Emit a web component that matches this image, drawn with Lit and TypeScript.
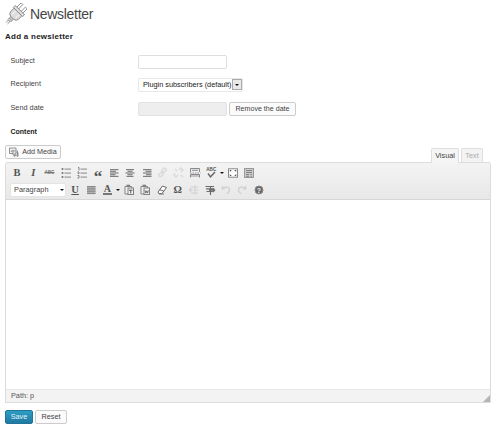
import { LitElement, html, svg, css } from "lit";
import { customElement } from "lit/decorators.js";

const lines = (rows: number[][], color = "#808080") =>
  svg`${rows.map(([x, y, w]) => svg`<rect x=${x} y=${y} width=${w} height="1.2" fill=${color}/>`)}`;

const glyphs: Record<string, unknown> = {
  bullets: svg`${lines([[6.5, 3.5, 6.5], [6.5, 7.5, 6.5], [6.5, 11.5, 6.5]], "#999")}<g fill="#777"><circle cx="4.5" cy="4" r="1.1"/><circle cx="4.5" cy="8" r="1.1"/><circle cx="4.5" cy="12" r="1.1"/></g>`,
  numbers: svg`${lines([[6.5, 3.5, 6.5], [6.5, 7.5, 6.5], [6.5, 11.5, 6.5]], "#999")}<path d="M4 2.500h1v3M3.500 7H5v1.500H3.700M3.500 10.500H5V13H3.500" fill="none" stroke="#777" stroke-width=".9"/>`,
  left: lines([[4, 4, 8.5], [4, 5.7, 6], [4, 7.4, 8.5], [4, 9.1, 5.5], [4, 10.8, 8.5]]),
  center: lines([[4, 4, 8], [5.5, 5.7, 5], [3.5, 7.4, 9], [5.5, 9.1, 5], [4.5, 10.8, 7]]),
  right: lines([[4, 4, 8.5], [6.5, 5.7, 6], [4, 7.4, 8.5], [7, 9.1, 5.5], [4, 10.8, 8.5]]),
  justify: svg`<rect x="4" y="4" width="8.5" height="8" fill="#b5b5b5"/>${lines([[4, 4, 8.5], [4, 6.3, 8.5], [4, 8.6, 8.5], [4, 10.9, 8.5]], "#8a8a8a")}`,
  link: svg`<g fill="none" stroke="#dadada" stroke-width="1.5"><rect x="7" y="4" width="5" height="3" rx="1.5" transform="rotate(-45 9 6)"/><rect x="3.5" y="8" width="5" height="3" rx="1.5" transform="rotate(-45 6 9.5)"/></g>`,
  unlink: svg`<g fill="none" stroke="#dadada" stroke-width="1.4"><path d="M4 8l-1 2 2 2 2-2M8 5l2-2 2 2-2 2M4 4l2 2M10 10l2 2"/></g>`,
  more: svg`<g fill="none" stroke="#888"><path d="M3.500 7V3.500h9V7M3.500 12.500V9.500h9v3M5 5.300h6"/><path d="M3 8h10.500" stroke-dasharray="1.500 1"/></g><path d="M4 10h8v2H4z" fill="#c4c4c4"/>`,
  full: svg`<rect x="3.500" y="3.800" width="9" height="8.400" fill="#fff" stroke="#888"/><path d="M4.800 5h2L4.800 7zM11.200 5h-2l2 2zM4.800 11h2l-2-2zM11.200 11h-2l2-2z" fill="#555"/>`,
  sink: svg`<rect x="3.500" y="3.500" width="9" height="9" fill="#ccc" stroke="#999"/><path d="M5 5.500h6M5 7.500h6M5 9.500h3M5 11.300h3M9.500 9.500H11M9.500 11.300H11" stroke="#808080"/>`,
  pasteText: svg`<g fill="#f4f4f4" stroke="#808080"><path d="M4 4.500h6.500v7.500H4z"/><path d="M5.500 3.500h3.500" stroke-width="1.600"/><rect x="7" y="6" width="5.500" height="6.500"/></g><path d="M8 8.200h3.500M9.750 8.200v3.300" stroke="#555"/>`,
  pasteWord: svg`<g fill="#f4f4f4" stroke="#808080"><path d="M4 4.500h6.500v7.500H4z"/><path d="M5.500 3.500h3.500" stroke-width="1.600"/><rect x="7" y="6" width="5.500" height="6.500"/></g><path d="M8 8.300l.8 2.800.9-2.300.9 2.300.8-2.800" stroke="#555" fill="none" stroke-width=".8"/>`,
  eraser: svg`<path d="M4 10l4.500-6 4 1.500-4.500 6H4.700zM5.700 7.700l4 1.400" fill="#fff" stroke="#666"/><path d="M5 12h5" stroke="#777"/>`,
  outdent: svg`<path d="M4.500 5h8M8 8h4.500M5 11h7M9 3.500v9M3 8h4M5.300 6.300L3.500 8l1.800 1.700" fill="none" stroke="#d2d2d2" stroke-width="1.200"/>`,
  indent: svg`<path d="M3.500 4.500h8.500M4 6.800h8.500M4.500 9.500h6M8.500 4v9M7 8.200h5.500M10.700 6.200l2 2-2 2" fill="none" stroke="#6b6b6b" stroke-width="1.200"/>`,
  undo: svg`<path d="M4.300 4v3h3M4.500 6.800C6 4.500 11 4.300 11.500 7.500 11.700 10 10 11 8.500 11.800" fill="none" stroke="#cecece" stroke-width="1.200"/>`,
  redo: svg`<path d="M11.700 4v3h-3M11.500 6.800C10 4.500 5 4.300 4.500 7.500 4.300 10 6 11 7.500 11.800" fill="none" stroke="#cecece" stroke-width="1.200"/>`,
  check: svg`<path d="M5 8.500l2.500 3.300L12 7" fill="none" stroke="#666" stroke-width="1.400"/>`,
};

const icon = (name: string) => html`<span class="cell"><svg viewBox="0 0 16 16">${glyphs[name]}</svg></span>`;
const arrow = html`<span class="arrow"><i class="caret"></i></span>`;

@customElement("app-root")
export class AppRoot extends LitElement {
  static styles = css`
    :host { display: block; height: 430px; overflow: hidden; background: #fff; color: #444;
      font: 7.3px/10px "Liberation Sans", Arial, sans-serif; white-space: nowrap; }
    * { box-sizing: border-box; }
    svg { display: block; }
    .page { padding: 2px 9px 0 5px; }
    .head { display: flex; align-items: center; height: 23px; gap: 3px; }
    .head svg { width: 22px; height: 22px; }
    h1 { margin: 0; font: 400 14px/20px "Liberation Sans", Arial, sans-serif; letter-spacing: -.3px; color: #464646; }
    h2 { margin: 6px 0 0; font-size: 8px; line-height: 11px; letter-spacing: .26px; color: #222; }
    .form { display: grid; grid-template-columns: 127.5px auto; grid-template-rows: 23px 23px 25px 22px;
      padding: 8px 0 0 5.5px; align-items: center; }
    .form .label { padding-bottom: 1px; }
    .form .strong { font-weight: 700; color: #222; font-size: 7px; }
    .line { display: flex; align-items: center; gap: 2px; }
    .field { width: 89px; height: 14px; border: 1px solid #dfdfdf; border-radius: 2px; }
    .off { background: #eee; border-color: #e2e2e2; }
    .select { display: flex; align-items: center; justify-content: space-between; width: 105px; height: 14px;
      border: 1px solid #e8e8e8; border-radius: 2px; padding-left: 4px; color: #222; }
    .drop { width: 10px; height: 11px; border: 1px solid #aaa; background: #e9e9e9;
      display: flex; align-items: center; justify-content: center; }
    .btn { display: inline-flex; align-items: center; justify-content: center; height: 14px;
      border: 1px solid #ccc; border-radius: 2px; background: #fbfbfb; }
    .remove { width: 67px; font-size: 7.1px; }
    .caret { border: 2.3px solid transparent; border-top: 2.8px solid #111; border-bottom: 0; }
    .drop .caret { border-width: 2px; border-bottom: 0; }
    .tabs { display: flex; align-items: flex-end; height: 19px; }
    .media { width: 56px; gap: 3px; margin-bottom: 3px; font-size: 7.2px; }
    .media svg { width: 10px; height: 10px; }
    .tab { height: 14px; border: 1px solid #dedede; border-bottom: 0; border-radius: 2px 2px 0 0;
      background: #f3f3f3; display: flex; align-items: center; justify-content: center; color: #aaa; width: 22px; margin-right: 8px; }
    .tab.on { height: 15px; width: 28px; margin: 0 2px -1px auto; background: #f5f5f5; color: #444; position: relative; }
    .editor { border: 1px solid #dcdcdc; height: 241px; display: flex; flex-direction: column; width: 486px; border-radius: 2px 2px 0 0; }
    .bar { height: 37px; padding: 1px 0 0 3px; background: linear-gradient(#f3f3f3, #e8e8e8); border-bottom: 1px solid #d6d6d6; }
    .row { display: flex; align-items: center; height: 17px; }
    .cell { width: 16.2px; height: 16px; flex: none; display: flex; align-items: center; justify-content: center;
      font: 700 10.5px/16px "Liberation Serif", serif; color: #555; }
    .cell svg { width: 16px; height: 16px; }
    .it { font-style: italic; }
    .un { text-decoration: underline; }
    .abc { font: 700 4.6px/16px "Liberation Sans", sans-serif; }
    .strike { text-decoration: line-through; color: #777; }
    .quote { font-size: 17px; padding-top: 8px; }
    .spell { position: relative; }
    .spell .abc { position: absolute; left: 3px; top: -3px; }
    .color { font-size: 10px; }
    .color b { line-height: 9px; padding: 0 1px; border-bottom: 2px solid #777; }
    .arrow { width: 5.5px; flex: none; display: flex; justify-content: center; }
    .format { width: 56px; height: 14px; margin: 0 1px; border: 1px solid #e4e4e4; background: #fff; border-radius: 2px;
      display: flex; align-items: center; justify-content: space-between; padding: 0 1.500px 0 3px; font-size: 7.300px; letter-spacing: .050px; }
    .canvas { flex: 1; }
    .status { height: 13px; display: flex; justify-content: space-between; align-items: center; background: #f3f3f3;
      border-top: 1px solid #e8e8e8; padding-left: 5px; color: #555; }
    .status svg { width: 7px; height: 7px; align-self: flex-end; }
    .actions { display: flex; gap: 2px; margin-top: 7px; }
    .save { width: 28px; background: linear-gradient(#2d9dc4, #2179a0); border-color: #21759b; color: #e6f5fb; }
    .reset { width: 32px; }
  `;

  render() {
    return html`<div class="page">
      <div class="head">
        <svg viewBox="0 0 22 22"><g transform="rotate(45 11 11)" fill="#ddd" stroke="#888" stroke-width=".9">
          <path d="M6.800 6V-.5h2.400V6M12.800 6V-.5h2.400V6" fill="#fff"/><path d="M4.500 5.500h13v2.700h-13z"/><path d="M5.500 8.200h11v4.500q0 3.300-3.500 3.800H9Q5.500 16 5.500 12.700z"/>
          <path d="M9.200 16.500h3.600v4H9.200zM9.200 18.500h3.600M10 20.500v3.500M12 20.500v3.500"/><path d="M8.500 9.500v4.500M13.500 9.500v4.500" stroke="#fff"/></g></svg>
        <h1>Newsletter</h1>
      </div>
      <h2>Add a newsletter</h2>
      <div class="form">
        <span class="label">Subject</span><div class="field"></div>
        <span class="label">Recipient</span><div class="select">Plugin subscribers (default)<span class="drop"><i class="caret"></i></span></div>
        <span class="label">Send date</span><div class="line"><div class="field off"></div><span class="btn remove">Remove the date</span></div>
        <span class="strong">Content</span>
      </div>
      <div class="tabs">
        <span class="btn media"><svg viewBox="0 0 10 10" fill="#eee" stroke="#888" stroke-width=".9"><path d="M.5 1h6.500v5.500H.5z"/><path d="M2 5l1.500-2L5 5"/><path d="M4 4h4.500v4H4z"/><path d="M6 9V6l3-.5V9" fill="none"/><circle cx="5.500" cy="9" r=".6"/><circle cx="8.500" cy="9" r=".6"/></svg>Add Media</span>
        <span class="tab on">Visual</span><span class="tab">Text</span>
      </div>
      <div class="editor">
        <div class="bar">
          <div class="row">
            <span class="cell">B</span><span class="cell it">I</span><span class="cell"><span class="abc strike">ABC</span></span>
            ${["bullets", "numbers"].map(icon)}<span class="cell quote">“</span>
            ${["left", "center", "right", "link", "unlink", "more"].map(icon)}
            <span class="cell spell"><span class="abc">ABC</span><svg viewBox="0 0 16 16">${glyphs.check}</svg></span>${arrow}
            ${["full", "sink"].map(icon)}
          </div>
          <div class="row">
            <span class="format">Paragraph<i class="caret"></i></span>
            <span class="cell un">U</span>${icon("justify")}<span class="cell color"><b>A</b></span>${arrow}
            ${["pasteText", "pasteWord", "eraser"].map(icon)}<span class="cell">Ω</span>
            ${["outdent", "indent", "undo", "redo"].map(icon)}
            <span class="cell"><svg viewBox="0 0 16 16"><circle cx="8" cy="8" r="4" fill="#666" stroke="#888"/><text x="8" y="10.500" text-anchor="middle" font-family="Liberation Sans" font-size="7" font-weight="700" fill="#eee">?</text></svg></span>
          </div>
        </div>
        <div class="canvas"></div>
        <div class="status">Path: p<svg viewBox="0 0 7 7"><path d="M7 0v7H0z" fill="#b5b5b5"/></svg></div>
      </div>
      <div class="actions"><span class="btn save">Save</span><span class="btn reset">Reset</span></div>
    </div>`;
  }
}
